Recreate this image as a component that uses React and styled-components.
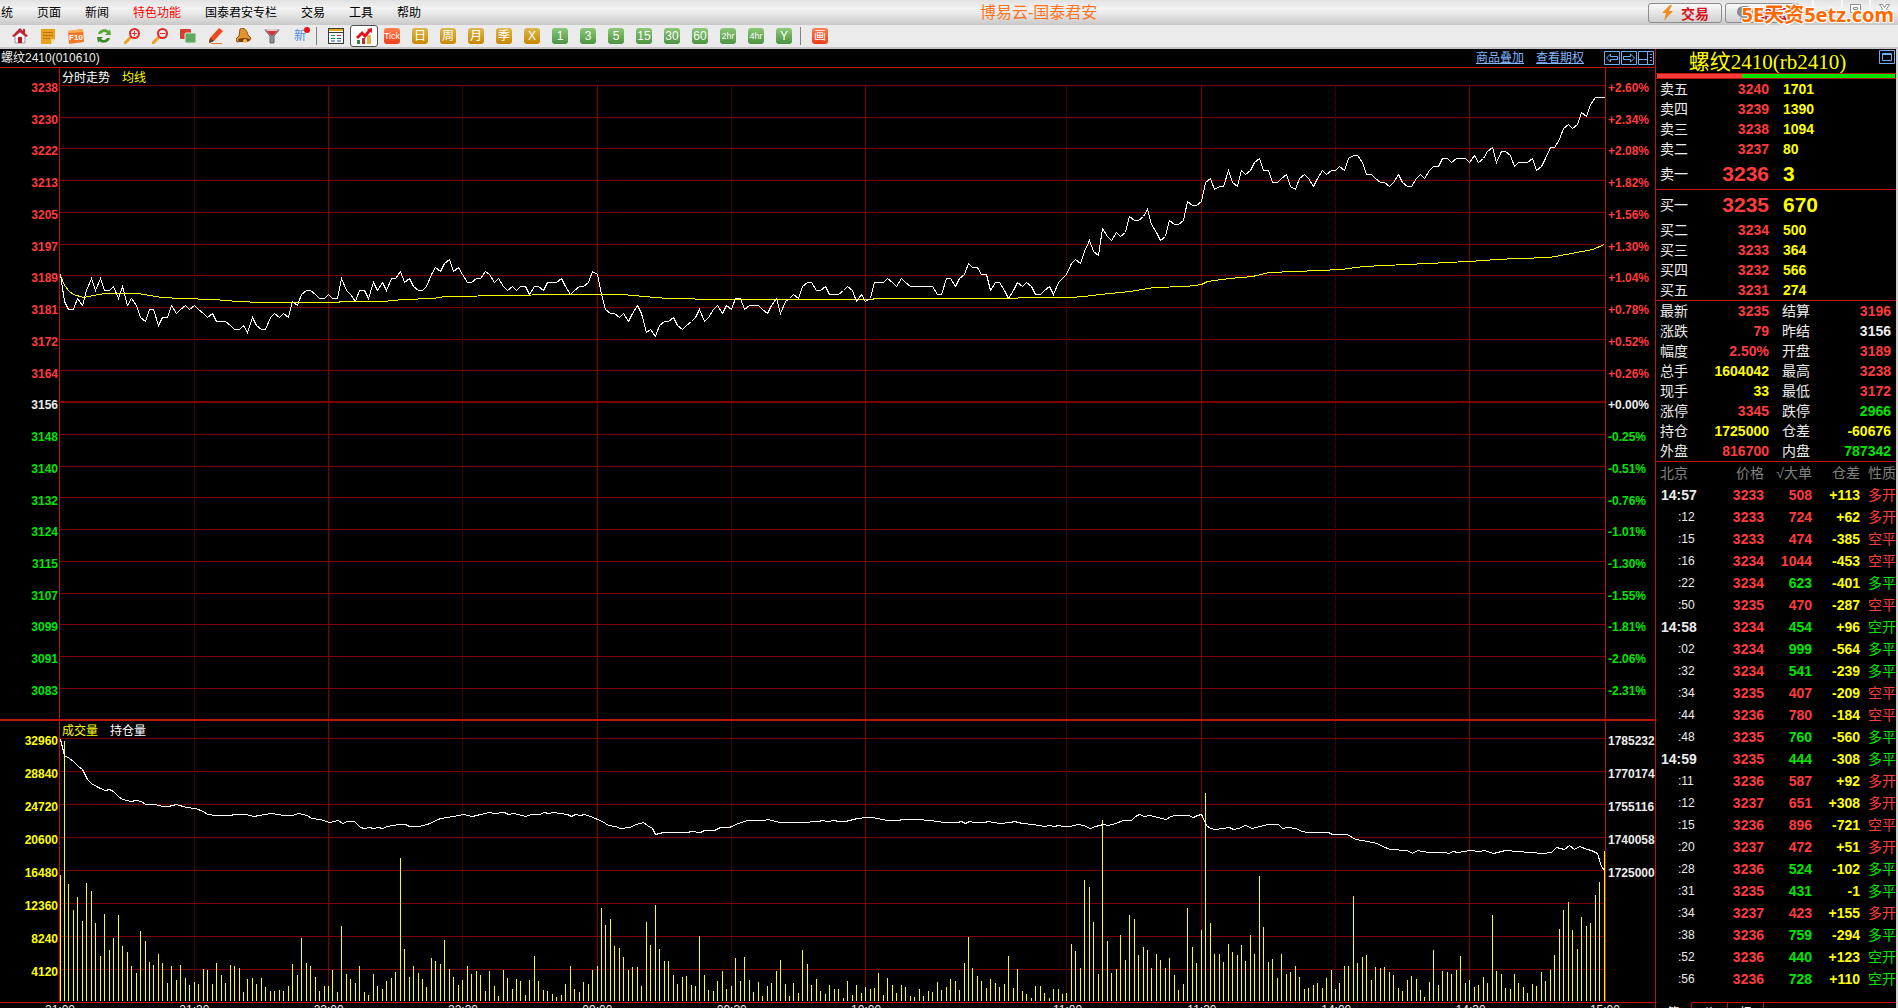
import React from 'react';
import styled, { createGlobalStyle } from 'styled-components'

const RED = '#ff3c3c'
const GREEN = '#00e600'
const YELLOW = '#ffff00'
const WHITE = '#ececec'
const LINE = '#c0140a'
const GRID = '#800000'

const tones = { r: RED, g: GREEN, y: YELLOW, w: WHITE }

const GlobalStyle = createGlobalStyle`
    *{
        box-sizing: border-box;
    }
    body{
        margin: 0;
        background: #000;
        overflow: hidden;
        font-family: "Liberation Sans", "Noto Sans CJK SC", sans-serif;
        font-size: 12px;
    }
    button{
        font-family: inherit;
        padding: 0;
        border: none;
        background: none;
    }
    table{
        border-collapse: collapse;
        border-spacing: 0;
    }
    td, th{
        padding: 0;
    }
`

/* ---------- data ---------- */

// last price for every trading minute
const prices = [
    3189, 3182, 3180, 3180, 3183, 3181, 3185, 3188, 3185, 3188, 3185, 3185, 3186, 3183, 3186,
    3181, 3183, 3181, 3178, 3177, 3180, 3180, 3176, 3178, 3178, 3181, 3179, 3180, 3181, 3180,
    3181, 3180, 3179, 3178, 3179, 3177, 3177, 3177, 3176, 3175, 3175, 3176, 3174, 3178, 3176,
    3175, 3175, 3178, 3179, 3178, 3179, 3178, 3182, 3181, 3184, 3185, 3185, 3184, 3183, 3183,
    3184, 3183, 3183, 3188, 3185, 3184, 3182, 3185, 3185, 3183, 3187, 3185, 3187, 3185, 3188,
    3188, 3190, 3187, 3188, 3186, 3185, 3185, 3186, 3189, 3191, 3190, 3192, 3193, 3190, 3191,
    3189, 3187, 3187, 3188, 3188, 3190, 3189, 3187, 3188, 3186, 3185, 3186, 3185, 3186, 3186,
    3184, 3186, 3186, 3185, 3187, 3187, 3187, 3188, 3186, 3184, 3185, 3186, 3186, 3187, 3190,
    3189, 3184, 3180, 3179, 3179, 3178, 3179, 3177, 3179, 3181, 3179, 3174, 3175, 3173, 3176,
    3177, 3177, 3178, 3176, 3175, 3176, 3177, 3178, 3180, 3177, 3178, 3180, 3181, 3179, 3181,
    3180, 3183, 3183, 3180, 3181, 3181, 3181, 3180, 3179, 3181, 3183, 3179, 3182, 3183, 3184,
    3183, 3186, 3187, 3187, 3185, 3185, 3186, 3184, 3184, 3184, 3185, 3186, 3185, 3182, 3184,
    3182, 3183, 3187, 3187, 3187, 3188, 3187, 3186, 3188, 3187, 3186, 3186, 3186, 3186, 3186,
    3186, 3184, 3184, 3188, 3188, 3186, 3188, 3189, 3192, 3191, 3191, 3189, 3189, 3185, 3187,
    3187, 3185, 3183, 3185, 3187, 3186, 3187, 3186, 3184, 3184, 3185, 3186, 3184, 3187, 3188,
    3189, 3192, 3193, 3192, 3195, 3198, 3195, 3194, 3201, 3199, 3198, 3200, 3199, 3200, 3204,
    3203, 3203, 3204, 3206, 3202, 3200, 3198, 3199, 3203, 3202, 3202, 3203, 3208, 3207, 3207,
    3208, 3213, 3214, 3211, 3212, 3212, 3216, 3213, 3212, 3216, 3215, 3216, 3218, 3219, 3216,
    3216, 3213, 3213, 3214, 3215, 3212, 3211, 3214, 3215, 3214, 3212, 3214, 3216, 3215, 3216,
    3216, 3217, 3216, 3219, 3220, 3220, 3218, 3215, 3215, 3214, 3213, 3213, 3212, 3213, 3215,
    3213, 3212, 3212, 3214, 3215, 3214, 3216, 3217, 3217, 3219, 3219, 3218, 3219, 3219, 3219,
    3218, 3220, 3218, 3219, 3221, 3222, 3218, 3221, 3221, 3220, 3217, 3218, 3218, 3218, 3219,
    3216, 3217, 3219, 3222, 3222, 3224, 3227, 3228, 3227, 3228, 3231, 3230, 3233, 3235, 3235, 3235,
]

// bar height for every trading minute
const volumes = [
    126, 260, 117, 91, 104, 80, 118, 110, 78, 45, 87, 51, 63, 86, 55, 49, 35, 28, 70, 60,
    39, 36, 47, 38, 18, 35, 21, 36, 23, 16, 19, 17, 32, 31, 17, 38, 26, 18, 36, 35,
    33, 9, 22, 23, 17, 23, 14, 10, 10, 11, 10, 15, 37, 26, 63, 38, 35, 24, 10, 15,
    15, 31, 9, 75, 27, 22, 18, 35, 9, 6, 27, 15, 12, 20, 23, 29, 143, 52, 24, 35,
    28, 22, 14, 43, 40, 37, 61, 32, 24, 16, 21, 35, 27, 30, 26, 10, 30, 15, 5, 31,
    23, 12, 22, 20, 6, 21, 45, 20, 11, 10, 7, 4, 6, 17, 35, 12, 9, 19, 17, 31,
    35, 93, 76, 82, 55, 53, 44, 31, 34, 34, 15, 79, 56, 96, 52, 40, 40, 26, 17, 24,
    25, 16, 15, 65, 26, 11, 10, 20, 30, 12, 15, 43, 20, 44, 21, 9, 19, 5, 15, 18,
    30, 41, 17, 5, 18, 8, 51, 37, 16, 22, 10, 7, 16, 12, 12, 3, 20, 6, 16, 8,
    14, 12, 13, 28, 6, 23, 16, 8, 16, 14, 5, 4, 12, 5, 10, 9, 19, 11, 14, 22,
    20, 11, 38, 64, 33, 25, 20, 13, 22, 18, 14, 17, 45, 13, 32, 10, 7, 3, 15, 15,
    8, 3, 12, 12, 7, 8, 57, 50, 33, 121, 114, 79, 27, 181, 60, 28, 32, 66, 41, 86,
    82, 46, 54, 51, 33, 47, 41, 33, 43, 26, 11, 17, 93, 54, 38, 71, 208, 78, 47, 47,
    39, 57, 49, 46, 56, 40, 66, 47, 125, 74, 39, 42, 23, 47, 27, 29, 35, 24, 12, 13,
    16, 18, 13, 23, 31, 12, 18, 35, 35, 105, 38, 44, 46, 21, 34, 33, 34, 29, 26, 13,
    10, 21, 25, 22, 11, 4, 19, 51, 16, 30, 29, 27, 31, 45, 18, 21, 14, 16, 24, 18,
    86, 30, 27, 13, 12, 27, 18, 14, 8, 17, 15, 29, 20, 31, 46, 72, 91, 99, 71, 52,
    84, 75, 78, 106, 119, 150,
]

const average = '0,190 4,200 9,206 13,209 23,212 33,210 45,208 78,208 101,212 122,213 153,214 177,216 201,217 276,217 282,216 323,216 343,214 373,213 385,211 450,210 493,209 562,209 584,211 607,213 661,214 812,214 814,213 907,213 1010,212 1023,211 1040,209 1070,206 1093,202 1126,201 1141,199 1147,196 1169,193 1192,191 1209,187 1235,186 1281,184 1303,181 1346,179 1388,177 1425,175 1435,174 1458,173 1489,172 1511,168 1532,164 1544,159'

const openInterest = '0,18 4,34 9,37 13,40 18,45 22,48 27,58 31,62 36,65 40,67 45,69 49,68 53,70 58,75 62,78 71,80 75,79 81,80 85,83 95,83 102,85 108,85 116,83 126,86 135,87 143,90 147,93 156,94 171,94 173,93 186,93 193,95 199,94 211,92 224,94 232,94 238,92 247,94 251,97 260,98 269,101 278,99 282,102 287,100 294,100 300,106 304,107 309,106 313,107 318,106 322,107 327,105 338,103 345,103 349,105 358,105 367,103 380,97 393,95 403,93 412,95 420,93 429,91 434,92 444,91 448,93 454,92 465,95 471,93 479,93 484,91 488,92 493,91 507,93 511,95 515,93 520,94 524,93 530,95 542,100 548,104 555,105 560,107 569,106 576,103 583,101 587,104 592,107 595,113 603,111 627,111 631,110 640,111 644,109 654,109 660,106 669,106 678,102 687,99 704,99 707,98 720,101 741,101 758,100 762,99 767,100 774,99 778,100 785,100 797,97 807,96 812,96 827,99 838,99 842,98 857,98 870,99 884,101 897,101 901,100 905,102 909,100 914,101 924,101 928,100 933,101 940,102 950,101 954,100 962,102 973,103 984,105 989,104 994,105 998,104 1003,105 1010,105 1017,103 1023,104 1030,107 1035,105 1043,103 1048,104 1055,102 1063,99 1071,99 1075,95 1079,93 1084,95 1089,94 1106,98 1110,95 1115,94 1128,94 1133,96 1137,94 1141,93 1146,104 1150,107 1155,108 1169,106 1173,108 1178,107 1185,104 1192,107 1199,105 1208,103 1218,103 1222,107 1227,106 1236,107 1241,110 1248,111 1268,111 1272,113 1287,113 1295,118 1307,120 1317,122 1322,125 1330,128 1347,129 1352,132 1357,129 1368,131 1385,131 1388,132 1393,130 1397,131 1410,129 1419,130 1424,129 1433,132 1445,129 1457,130 1470,131 1482,132 1491,131 1496,126 1504,128 1509,124 1514,128 1519,125 1527,128 1531,129 1537,132 1541,145 1544,149'

const priceAxis = [
    ['3238', '+2.60%'], ['3230', '+2.34%'], ['3222', '+2.08%'], ['3213', '+1.82%'], ['3205', '+1.56%'],
    ['3197', '+1.30%'], ['3189', '+1.04%'], ['3181', '+0.78%'], ['3172', '+0.52%'], ['3164', '+0.26%'],
    ['3156', '+0.00%'], ['3148', '-0.25%'], ['3140', '-0.51%'], ['3132', '-0.76%'], ['3124', '-1.01%'],
    ['3115', '-1.30%'], ['3107', '-1.55%'], ['3099', '-1.81%'], ['3091', '-2.06%'], ['3083', '-2.31%'],
]
const volumeAxis = ['32960', '28840', '24720', '20600', '16480', '12360', '8240', '4120']
const interestAxis = ['1785232', '1770174', '1755116', '1740058', '1725000']

// [label, minutes until the next label]
const timeAxis = [
    ['21:00', 30], ['21:30', 30], ['22:00', 30], ['22:30', 30], ['09:00', 30], ['09:30', 30],
    ['10:00', 45], ['11:00', 30], ['11:30', 30], ['14:00', 30], ['14:30', 30], ['15:00', 0],
]

const menus = ['系统', '页面', '新闻', '特色功能', '国泰君安专栏', '交易', '工具', '帮助']

const asks = [['卖五', '3240', '1701'], ['卖四', '3239', '1390'], ['卖三', '3238', '1094'], ['卖二', '3237', '80'], ['卖一', '3236', '3', true]]
const bids = [['买一', '3235', '670', true], ['买二', '3234', '500'], ['买三', '3233', '364'], ['买四', '3232', '566'], ['买五', '3231', '274']]

const stats = [
    ['最新', '3235', 'r', '结算', '3196', 'r'],
    ['涨跌', '79', 'r', '昨结', '3156', 'w'],
    ['幅度', '2.50%', 'r', '开盘', '3189', 'r'],
    ['总手', '1604042', 'y', '最高', '3238', 'r'],
    ['现手', '33', 'y', '最低', '3172', 'r'],
    ['涨停', '3345', 'r', '跌停', '2966', 'g'],
    ['持仓', '1725000', 'y', '仓差', '-60676', 'y'],
    ['外盘', '816700', 'r', '内盘', '787342', 'g'],
]

const ticks = [
    ['14:57', '3233', '508', '+113', '多开', 'r'],
    [':12', '3233', '724', '+62', '多开', 'r'],
    [':15', '3233', '474', '-385', '空平', 'r'],
    [':16', '3234', '1044', '-453', '空平', 'r'],
    [':22', '3234', '623', '-401', '多平', 'g'],
    [':50', '3235', '470', '-287', '空平', 'r'],
    ['14:58', '3234', '454', '+96', '空开', 'g'],
    [':02', '3234', '999', '-564', '多平', 'g'],
    [':32', '3234', '541', '-239', '多平', 'g'],
    [':34', '3235', '407', '-209', '空平', 'r'],
    [':44', '3236', '780', '-184', '空平', 'r'],
    [':48', '3235', '760', '-560', '多平', 'g'],
    ['14:59', '3235', '444', '-308', '多平', 'g'],
    [':11', '3236', '587', '+92', '多开', 'r'],
    [':12', '3237', '651', '+308', '多开', 'r'],
    [':15', '3236', '896', '-721', '空平', 'r'],
    [':20', '3237', '472', '+51', '多开', 'r'],
    [':28', '3236', '524', '-102', '多平', 'g'],
    [':31', '3235', '431', '-1', '多平', 'g'],
    [':34', '3237', '423', '+155', '多开', 'r'],
    [':38', '3236', '759', '-294', '多平', 'g'],
    [':52', '3236', '440', '+123', '空开', 'g'],
    [':56', '3236', '728', '+110', '空开', 'g'],
]

/* ---------- toolbar icons ---------- */

const icons = {
    home: <>
        <path d="M3 8v7h10V8L8 4z" fill="#f4f4f4" stroke="#999" />
        <path d="M0 8l8-8 3 3V1h2v4l3 3-2 1-6-5-6 5z" fill="#c8202c" />
        <rect x="6" y="9" width="4" height="6" fill="#b01822" />
    </>,
    note: <>
        <path d="M1 1h14v10l-4 5H1z" fill="#e8a21c" />
        <path d="M11 16v-5h4z" fill="#f8dc90" />
        <path d="M3 4.5h10M3 7.5h10M3 10.5h7" stroke="#b87408" />
    </>,
    f10: <>
        <path d="M0 3l15-2 1 13-15 2z" fill="#f07828" />
        <path d="M0 3l15-2v3L0 5z" fill="#f8b050" />
        <text x="8" y="12" textAnchor="middle" fontSize="8" fontWeight="bold" fill="#fff">F10</text>
    </>,
    refresh: <>
        <path d="M2 6c1-5 8-6 11-3l1-2 1 6H9l2-2C9 3 6 4 5 6z" fill="#58a838" />
        <path d="M14 10c-1 5-8 6-11 3l-1 2-1-6h6l-2 2c2 2 5 1 6-1z" fill="#3c8c28" />
    </>,
    zoomIn: <>
        <path d="M1 15l6-6" stroke="#f0a020" strokeWidth="3" strokeLinecap="round" />
        <circle cx="10.5" cy="5.5" r="4.5" fill="#ffecec" stroke="#e02828" strokeWidth="2" />
        <path d="M8 5.5h5M10.5 3v5" stroke="#e02828" />
    </>,
    zoomOut: <>
        <path d="M1 15l6-6" stroke="#f0a020" strokeWidth="3" strokeLinecap="round" />
        <circle cx="10.5" cy="5.5" r="4.5" fill="#ffecec" stroke="#e02828" strokeWidth="2" />
        <path d="M8 5.5h5" stroke="#e02828" />
    </>,
    layers: <>
        <rect x="0" y="1" width="11" height="10" rx="1" fill="#d83c34" />
        <rect x="5" y="5" width="11" height="10" rx="1" fill="#62a860" stroke="#d8ecd4" />
    </>,
    pencil: <>
        <path d="M2 10L11 0l4 3-9 10-5 2z" fill="#e84c20" />
        <path d="M2 10l4 3-5 2z" fill="#604020" />
        <path d="M3 15.5h11" stroke="#f07040" />
    </>,
    bell: <>
        <path d="M4 1c4-2 7 1 8 6l3 3-1 2L1 14l-1-3 3-3z" fill="#e0962c" stroke="#905010" />
        <ellipse cx="8" cy="12" rx="6" ry="2" fill="#7c3c10" />
        <circle cx="9" cy="13" r="2" fill="#f0c040" />
    </>,
    funnel: <>
        <path d="M1 2h14l-5 6v7H6V8z" fill="#909498" stroke="#606468" />
        <path d="M3 3h10L8 8z" fill="#e02c38" />
        <ellipse cx="8" cy="2" rx="6" ry="1" fill="#f4d0d0" />
    </>,
    table: <>
        <rect x=".5" y=".5" width="15" height="15" fill="#fff" stroke="#383838" />
        <path d="M1 2h14" stroke="#e8a820" strokeWidth="2" />
        <path d="M1 4.5h14" stroke="#383838" />
        <path d="M3 7.5h4M3 10.5h4" stroke="#109030" />
        <path d="M9 7.5h4" stroke="#d02020" />
        <path d="M9 10.5h4M3 13h4M9 13h4" stroke="#2050a0" />
    </>,
    trend: <>
        <rect x="1" y="12" width="3" height="4" fill="#30884c" />
        <rect x="6" y="10" width="3" height="6" fill="#b83030" />
        <rect x="11" y="7" width="4" height="9" fill="#e8b040" />
        <path d="M1 10l5-5 3 3 5-6" stroke="#e01420" strokeWidth="3" fill="none" />
        <path d="M16 0v5l-5-4z" fill="#e01420" />
    </>,
}

const tools = [
    ['首页', 'home'], ['公告', 'note'], ['F10资料', 'f10'], ['刷新', 'refresh'], ['放大', 'zoomIn'], ['缩小', 'zoomOut'],
    ['叠加', 'layers'], ['画线', 'pencil'], ['预警', 'bell'], ['选股', 'funnel'],
]
const periods = [
    ['Tick', 'hot'], ['日', 'gold'], ['周', 'gold'], ['月', 'gold'], ['季', 'gold'], ['X', 'gold'],
    ['1', 'green'], ['3', 'green'], ['5', 'green'], ['15', 'green'], ['30', 'green'], ['60', 'green'],
    ['2hr', 'green'], ['4hr', 'green'], ['Y', 'green'],
]

/* ---------- charts ---------- */

const W = 1545
const MINUTES = 345
const TICK_HEIGHT = 3.866
const minuteX = (i) => Math.floor(i * (W - 1) / MINUTES) + 0.5
const splits = [[30, true], [60], [90, true], [120], [150, true], [180], [225, true], [255], [285, true], [315]]

function Verticals({ height }) {
    return splits.map(([minute, dotted]) => (
        <path key={minute} d={`M${minuteX(minute)} 0V${height}`} stroke={GRID} strokeDasharray={dotted ? '1 1' : undefined} />
    ))
}

function PriceChart() {
    const rows = priceAxis.map((_, i) => Math.round(i * 31.72) + 0.5)
    const points = prices.map((p, i) => `${minuteX(i)},${Math.round((3238 - p) * TICK_HEIGHT) + 0.5}`)
    return (
        <Plot viewBox="0 0 1545 634" preserveAspectRatio="none" role="img" aria-label="分时走势">
            {rows.map((y) => <path key={y} d={`M0 ${y}H${W}`} stroke={GRID} />)}
            <path d={`M0 317H${W}`} stroke={GRID} strokeWidth="2" />
            <Verticals height={634} />
            <polyline points={average} stroke={YELLOW} transform="translate(.5 .5)" />
            <polyline points={points.join(' ')} stroke="#fff" />
        </Plot>
    )
}

function VolumeChart() {
    const bars = volumes.map((v, i) => `M${minuteX(i)} ${280 - v}V280`)
    return (
        <Plot viewBox="0 0 1545 281" preserveAspectRatio="none" role="img" aria-label="成交量">
            {volumeAxis.map((v, i) => <path key={v} d={`M0 ${17.5 + i * 33}H${W}`} stroke={GRID} />)}
            <Verticals height={281} />
            <path d={bars.join('')} stroke={YELLOW} />
            <polyline points={openInterest} stroke="#fff" transform="translate(.5 .5)" />
        </Plot>
    )
}

/* ---------- parts ---------- */

function TopBar() {
    return (
        <Menu>
            <MenuList>
                {menus.map((m) => <MenuItem key={m} $hot={m === '特色功能'}>{m}</MenuItem>)}
            </MenuList>
            <AppTitle>博易云-国泰君安</AppTitle>
            <TopActions>
                <TradeButton>
                    <svg width="14" height="16" viewBox="0 0 14 16"><path d="M9 0L1 8h4l-2 8 9-10H8l3-6z" fill="#f09020" /></svg>
                    交易
                </TradeButton>
                <TradeButton>
                    <svg width="16" height="14" viewBox="0 0 16 14"><path d="M8 0c5 0 8 2 8 6s-3 6-8 6l-5 2 1-3C1 10 0 8 0 6c0-4 3-6 8-6z" fill="#8c8c8c" /></svg>
                    论坛
                </TradeButton>
            </TopActions>
            <WindowButtons>
                <WindowButton aria-label="最小化"><svg width="14" height="12"><rect x="1.5" y="7.5" width="11" height="3" fill="#fff" stroke="#909090" /></svg></WindowButton>
                <WindowButton aria-label="还原"><svg width="14" height="12"><path d="M1.5 1.5h10v8h-10zM4.5 4.5h4v2h-4z" fill="#fff" stroke="#909090" /></svg></WindowButton>
                <WindowButton aria-label="关闭"><svg width="14" height="12"><path d="M1.5 1.5h3l2 3 2-3h3l-3 4.5 3 4.5h-3l-2-3-2 3h-3l3-4.5z" fill="#fff" stroke="#909090" /></svg></WindowButton>
            </WindowButtons>
            <SiteMark>5E天资5etz.com</SiteMark>
        </Menu>
    )
}

function ToolBar() {
    return (
        <Tools>
            {tools.map(([name, icon]) => (
                <Tool key={name} aria-label={name}>
                    <svg width="16" height="16" viewBox="0 0 16 16" fill="none">{icons[icon]}</svg>
                </Tool>
            ))}
            <Tool><NewBadge>新</NewBadge></Tool>
            <Separator />
            <Tool aria-label="报价"><svg width="16" height="16" viewBox="0 0 16 16">{icons.table}</svg></Tool>
            <Tool $active aria-label="分时"><svg width="16" height="16" viewBox="0 0 16 16">{icons.trend}</svg></Tool>
            {periods.map(([name, tone]) => <Tool key={name}><Chip $tone={tone} $small={name.length > 2}>{name}</Chip></Tool>)}
            <Separator />
            <Tool><Chip $tone="hot">画</Chip></Tool>
        </Tools>
    )
}

function PriceRows({ rows }) {
    return (
        <QuoteTable>
            <tbody>
                {rows.map(([name, price, count, big]) => (
                    <QuoteRow key={name} $big={big}>
                        <Label scope="row">{name}</Label>
                        <Value $big={big} $tone="r">{price}</Value>
                        <Count $big={big}>{count}</Count>
                    </QuoteRow>
                ))}
            </tbody>
        </QuoteTable>
    )
}

function Sidebar() {
    return (
        <Side>
            <SideTitle>
                <h1>螺纹2410(rb2410)</h1>
                <FrameButton aria-label="窗口"><svg width="16" height="14"><path d="M.5 .5h15v13H.5zM3.5 3.5h9v7h-9zM3.5 4.5h9" fill="none" stroke="#6cb0f8" /></svg></FrameButton>
            </SideTitle>
            <Balance><i /><b /></Balance>
            <PriceRows rows={asks} />
            <PriceRows rows={bids} />
            <QuoteTable>
                <tbody>
                    {stats.map(([a, av, at, b, bv, bt]) => (
                        <QuoteRow key={a}>
                            <Label scope="row">{a}</Label>
                            <Value $tone={at}>{av}</Value>
                            <Label scope="row" $second>{b}</Label>
                            <Value $tone={bt} $last>{bv}</Value>
                        </QuoteRow>
                    ))}
                </tbody>
            </QuoteTable>
            <TickTable>
                <colgroup>
                    <col width="48" /><col width="60" /><col width="48" /><col width="48" /><col width="36" />
                </colgroup>
                <thead>
                    <tr><th>北京</th><th>价格</th><th>√大单</th><th>仓差</th><th>性质</th></tr>
                </thead>
                <tbody>
                    {ticks.map(([time, price, size, diff, kind, tone], i) => (
                        <tr key={i}>
                            <TickTime $minute={time.length === 5}>{time}</TickTime>
                            <Cell $tone="r">{price}</Cell>
                            <Cell $tone={tone}>{size}</Cell>
                            <Cell $tone="y">{diff}</Cell>
                            <Kind $tone={tone}>{kind}</Kind>
                        </tr>
                    ))}
                </tbody>
            </TickTable>
            <Tabs>
                <Tab $active>笔</Tab>
                <Tab>价</Tab>
                <Tab>细</Tab>
                <TabRest />
            </Tabs>
        </Side>
    )
}

export default function App() {
    return (
        <Page>
            <GlobalStyle />
            <TopBar />
            <ToolBar />
            <Main>
                <Board>
                    <BoardTitle>
                        <span>螺纹2410(010610)</span>
                        <BoardLinks>
                            <a href="#overlay">商品叠加</a>
                            <a href="#options">查看期权</a>
                        </BoardLinks>
                        <FrameButtons>
                            <FrameButton aria-label="后退"><svg width="16" height="14"><path d="M.5 .5h15v13H.5zM2.5 7l4-4v2.5h7v3h-7V11z" fill="none" stroke="#6cb0f8" /></svg></FrameButton>
                            <FrameButton aria-label="前进"><svg width="16" height="14"><path d="M.5 .5h15v13H.5zM13.5 7l-4-4v2.5h-7v3h7V11z" fill="none" stroke="#6cb0f8" /></svg></FrameButton>
                            <FrameButton aria-label="布局"><svg width="16" height="14"><path d="M.5 .5h15v13H.5zM.5 8.5h9M9.5 .5v13M12 3.5h2M12 6.5h2M12 9.5h2" fill="none" stroke="#6cb0f8" /></svg></FrameButton>
                        </FrameButtons>
                    </BoardTitle>
                    <PricePanel>
                        <PriceScale $right>
                            {priceAxis.map(([p], i) => <AxisLabel key={p} $tone={i < 10 ? 'r' : i > 10 ? 'g' : 'w'}>{p}</AxisLabel>)}
                        </PriceScale>
                        <Canvas>
                            <Legend><span>分时走势</span><em>均线</em></Legend>
                            <PriceChart />
                        </Canvas>
                        <PriceScale>
                            {priceAxis.map(([, p], i) => <AxisLabel key={p} $tone={i < 10 ? 'r' : i > 10 ? 'g' : 'w'}>{p}</AxisLabel>)}
                        </PriceScale>
                    </PricePanel>
                    <VolumePanel>
                        <VolumeScale $right>
                            {volumeAxis.map((v) => <AxisLabel key={v} $tone="y">{v}</AxisLabel>)}
                        </VolumeScale>
                        <Canvas>
                            <Legend $over><em>成交量</em><span>持仓量</span></Legend>
                            <VolumeChart />
                        </Canvas>
                        <VolumeScale>
                            {interestAxis.map((v) => <AxisLabel key={v} $tone="w">{v}</AxisLabel>)}
                        </VolumeScale>
                    </VolumePanel>
                    <TimeScale>
                        {timeAxis.map(([t, span]) => <TimeMark key={t} $span={span}><span>{t}</span></TimeMark>)}
                    </TimeScale>
                </Board>
                <Sidebar />
            </Main>
        </Page>
    )
}

/* ---------- styles ---------- */

const Page = styled.div`
    height: 100vh;
    display: flex;
    flex-direction: column;
    overflow: hidden;
    background: #000;
`

const Menu = styled.header`
    position: relative;
    flex: none;
    height: 25px;
    display: flex;
    align-items: center;
    background: linear-gradient(#e2e2e2, #f3f3f3 35%, #e4e4e4 60%, #c9c9c9);
`

const MenuList = styled.nav`
    display: flex;
    gap: 24px;
    margin-left: -11px;
`

const MenuItem = styled.button`
    font-size: 12px;
    line-height: 24px;
    white-space: nowrap;
    color: ${(p) => (p.$hot ? '#ff0000' : '#000')};
`

const AppTitle = styled.div`
    flex: 1;
    padding-left: 8px;
    text-align: center;
    font-size: 16px;
    line-height: 24px;
    color: #ff7420;
`

const TopActions = styled.div`
    display: flex;
    gap: 3px;
    padding-right: 13px;
`

const TradeButton = styled.button`
    width: 74px;
    height: 20px;
    display: flex;
    align-items: center;
    justify-content: center;
    gap: 6px;
    border: 1px solid #8c8c8c;
    border-radius: 3px;
    background: linear-gradient(#fafafa, #d0d0d0);
    color: #d81420;
    font-size: 14px;
    font-weight: bold;
`

const WindowButtons = styled.div`
    display: flex;
    align-self: flex-start;
    width: 86px;
    height: 18px;
`

const WindowButton = styled.button`
    flex: 1;
    display: flex;
    align-items: center;
    justify-content: center;
    border-left: 2px solid #f6f6f6;
`

const SiteMark = styled.div`
    position: absolute;
    right: 4px;
    top: 3px;
    font-family: "Noto Sans", "Noto Sans CJK SC", sans-serif;
    font-size: 20px;
    line-height: 24px;
    font-weight: bold;
    color: #ff6a00;
    text-shadow: 1px 1px 0 #fff, -1px -1px 0 #fff, 1px -1px 0 #fff, -1px 1px 0 #fff;
`

const Tools = styled.div`
    flex: none;
    height: 24px;
    display: flex;
    padding-left: 6px;
    background: #ebebeb;
    border-bottom: 2px solid #c8c4c8;
`

const Tool = styled.button`
    width: 28px;
    height: 22px;
    display: flex;
    align-items: center;
    justify-content: center;
    border: 1px solid ${(p) => (p.$active ? '#505050' : 'transparent')};
    border-radius: 3px;
    background: ${(p) => (p.$active ? '#fff' : 'none')};
`

const Separator = styled.i`
    width: 6px;
    height: 18px;
    margin: 2px 0 0 2px;
    border-left: 1px solid #808080;
`

const NewBadge = styled.span`
    position: relative;
    font-size: 12px;
    line-height: 16px;
    color: #4a90e0;
    &::after{
        content: '';
        position: absolute;
        right: -4px;
        top: -1px;
        width: 6px;
        height: 6px;
        border-radius: 50%;
        background: #f01010;
    }
`

const chipFill = {
    hot: 'linear-gradient(#ff8050, #f03c18)',
    gold: 'linear-gradient(#dcb850, #c88800)',
    green: 'linear-gradient(#8cc878, #4c9440)',
}

const Chip = styled.span`
    width: 16px;
    height: 16px;
    display: flex;
    align-items: center;
    justify-content: center;
    border-radius: 3px;
    background: ${(p) => chipFill[p.$tone]};
    color: #fff;
    font-size: ${(p) => (p.$small ? '9px' : '12px')};
    line-height: 16px;
`

const Main = styled.main`
    flex: 1;
    min-height: 0;
    display: flex;
    border-right: 2px solid #d4d4d4;
`

const Board = styled.section`
    flex: 1;
    min-width: 0;
    display: flex;
    flex-direction: column;
`

const BoardTitle = styled.div`
    flex: none;
    height: 19px;
    display: flex;
    align-items: center;
    padding: 0 1px;
    border-bottom: 1px solid ${LINE};
    color: ${WHITE};
    line-height: 18px;
`

const BoardLinks = styled.div`
    display: flex;
    gap: 12px;
    margin: 0 20px 0 auto;
    a{
        color: #80b8ff;
    }
`

const FrameButtons = styled.div`
    display: flex;
    gap: 1px;
`

const FrameButton = styled.button`
    width: 16px;
    height: 14px;
    svg{
        display: block;
    }
`

const Panel = styled.div`
    display: grid;
    grid-template-columns: 59px minmax(0, 1fr) 49px;
`

const PricePanel = styled(Panel)`
    flex: 1;
    min-height: 0;
`

const VolumePanel = styled(Panel)`
    flex: none;
    height: 284px;
    border-top: 2px solid ${LINE};
    border-bottom: 1px solid ${LINE};
`

const Canvas = styled.div`
    position: relative;
    min-height: 0;
    display: flex;
    flex-direction: column;
    border: solid ${LINE};
    border-width: 0 1px;
`

const Plot = styled.svg`
    flex: 1;
    width: 100%;
    min-height: 0;
    display: block;
    fill: none;
    shape-rendering: crispEdges;
`

const Legend = styled.div`
    ${(p) => (p.$over ? 'position: absolute; left: 0; top: 0;' : 'flex: none;')}
    display: flex;
    gap: 12px;
    height: 17px;
    padding-left: 2px;
    line-height: 20px;
    color: #fff;
    em{
        font-style: normal;
        color: ${YELLOW};
    }
`

const Scale = styled.div`
    display: flex;
    flex-direction: column;
    align-items: ${(p) => (p.$right ? 'flex-end' : 'flex-start')};
    padding: ${(p) => (p.$right ? '0 1px 0 0' : '0 0 0 2px')};
    font-weight: bold;
`

const AxisLabel = styled.span`
    color: ${(p) => tones[p.$tone]};
`

const PriceScale = styled(Scale)`
    justify-content: space-between;
    padding-top: 11px;
    padding-bottom: 19px;
    line-height: 18px;
`

const VolumeScale = styled(Scale)`
    padding-top: 4px;
    line-height: 33px;
`

const TimeScale = styled.div`
    flex: none;
    height: 5px;
    display: flex;
    padding: 0 50px 0 60px;
    color: ${WHITE};
    line-height: 14px;
`

const TimeMark = styled.div`
    flex: ${(p) => p.$span} 0 0;
    span{
        display: flex;
        justify-content: center;
        width: 0;
    }
`

const Side = styled.aside`
    flex: none;
    width: 241px;
    display: flex;
    flex-direction: column;
    border-left: 1px solid ${LINE};
`

const SideTitle = styled.div`
    display: flex;
    height: 24px;
    padding: 1px 1px 0 0;
    h1{
        flex: 1;
        margin: 0;
        text-align: center;
        font-family: "Liberation Serif", "Noto Sans CJK SC", serif;
        font-size: 21px;
        line-height: 24px;
        font-weight: normal;
        color: ${YELLOW};
    }
`

const Balance = styled.div`
    display: flex;
    height: 6px;
    padding: 0 1px;
    border: solid ${LINE};
    border-width: 1px 0;
    i{
        flex: 85;
        background: ${RED};
    }
    b{
        flex: 153;
        background: ${GREEN};
    }
`

const QuoteTable = styled.table`
    width: 100%;
    table-layout: fixed;
    border-bottom: 1px solid ${LINE};
    border-collapse: separate;
`

const QuoteRow = styled.tr`
    height: ${(p) => (p.$big ? '30px' : '20px')};
`

const Label = styled.th`
    width: ${(p) => (p.$second ? '57px' : '50px')};
    padding-left: ${(p) => (p.$second ? '13px' : '4px')};
    text-align: left;
    font-size: 14px;
    line-height: 20px;
    font-weight: normal;
    color: ${WHITE};
`

const Value = styled.td`
    padding-right: ${(p) => (p.$last ? '5px' : '0')};
    width: ${(p) => (p.$last ? 'auto' : '63px')};
    text-align: right;
    font-size: ${(p) => (p.$big ? '21px' : '14px')};
    line-height: 20px;
    font-weight: bold;
    color: ${(p) => tones[p.$tone]};
`

const Count = styled.td`
    padding-left: 14px;
    font-size: ${(p) => (p.$big ? '21px' : '14px')};
    line-height: 20px;
    font-weight: bold;
    color: ${YELLOW};
`

const TickTable = styled.table`
    width: 240px;
    table-layout: fixed;
    font-size: 14px;
    line-height: 22px;
    text-align: right;
    th{
        height: 22px;
        font-weight: normal;
        color: #808080;
        white-space: nowrap;
    }
    th:first-child{
        text-align: left;
        padding-left: 4px;
    }
`

const Cell = styled.td`
    height: 22px;
    font-weight: bold;
    color: ${(p) => tones[p.$tone]};
`

const Kind = styled(Cell)`
    font-weight: normal;
`

const TickTime = styled.td`
    text-align: left;
    padding-left: ${(p) => (p.$minute ? '5px' : '22px')};
    font-size: ${(p) => (p.$minute ? '14px' : '12px')};
    font-weight: ${(p) => (p.$minute ? 'bold' : 'normal')};
    color: ${WHITE};
`

const Tabs = styled.div`
    display: flex;
    height: 6px;
    margin-top: auto;
    overflow: hidden;
`

const Tab = styled.button`
    width: 36px;
    height: 20px;
    border-top: 1px solid ${(p) => (p.$active ? 'transparent' : LINE)};
    border-right: 1px solid ${LINE};
    color: ${WHITE};
    font-size: 12px;
    line-height: 14px;
`

const TabRest = styled.div`
    flex: 1;
    border-top: 1px solid ${LINE};
`
